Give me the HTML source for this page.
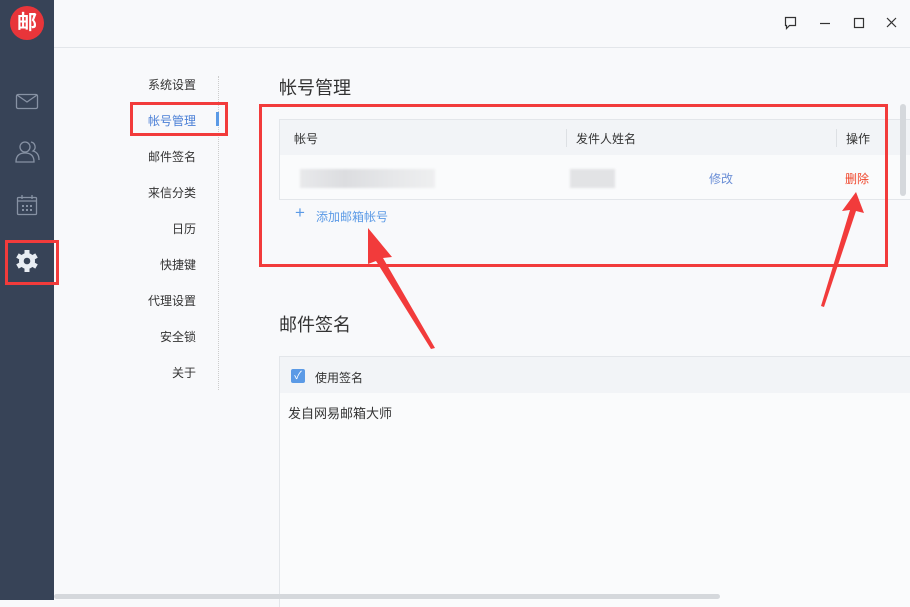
<!DOCTYPE html><html><head><meta charset="utf-8"><style>
body{margin:0;width:910px;height:600px;overflow:hidden;background:#f8f9fb;font-family:"Liberation Sans","Noto Sans CJK SC",sans-serif;position:relative}
.a{position:absolute}
.side{left:0;top:0;width:54px;height:600px;background:#374357}
.nav{font-size:12px;color:#333;width:70px;text-align:right;left:126px}
</style></head><body>
<div class="a side"></div>
<div class="a" style="left:10px;top:6px;width:34px;height:34px;border-radius:50%;background:#e8353a;color:#fff;font-size:20px;font-weight:bold;text-align:center;line-height:34px">邮</div>
<svg class="a" style="left:0;top:0" width="60" height="300">
<rect x="16.5" y="94.5" width="21" height="14" rx="1.5" fill="none" stroke="#8792a4" stroke-width="1.3"/><path d="M17 95l10 7 10-7" fill="none" stroke="#8792a4" stroke-width="1.3"/>
<circle cx="25" cy="147" r="5" fill="none" stroke="#8792a4" stroke-width="1.3"/><path d="M16 162c0-7 4-9 9-9s9 2 9 9z" fill="none" stroke="#8792a4" stroke-width="1.3"/><path d="M31 142a5 5 0 0 1 2 9c4 1 6 4 6 9" fill="none" stroke="#8792a4" stroke-width="1.3"/>
<rect x="17.5" y="197.5" width="19" height="17" rx="1" fill="none" stroke="#8792a4" stroke-width="1.3"/><path d="M22 195v4M32 195v4M18 201h18" stroke="#8792a4" stroke-width="1.3"/><g fill="#8792a4"><rect x="22" y="205" width="2" height="2"/><rect x="26" y="205" width="2" height="2"/><rect x="30" y="205" width="2" height="2"/><rect x="22" y="209" width="2" height="2"/><rect x="26" y="209" width="2" height="2"/><rect x="30" y="209" width="2" height="2"/></g>
<g transform="translate(27,261)" fill="#e8edf3"><circle r="8"/><g><rect x="-2.5" y="-11" width="5" height="22"/><rect x="-2.5" y="-11" width="5" height="22" transform="rotate(60)"/><rect x="-2.5" y="-11" width="5" height="22" transform="rotate(120)"/></g><circle r="3.3" fill="#374357"/></g>
<rect x="6.5" y="241.5" width="51" height="42" fill="none" stroke="#f23b3b" stroke-width="3"/>
</svg>
<div class="a" style="left:54px;top:47px;width:856px;height:1px;background:#e3e6ea"></div>
<svg class="a" style="left:780px;top:14px" width="120" height="20" fill="none" stroke="#333" stroke-width="1.2">
<path d="M5.5 3.5h10v8h-6l-3 3v-3h-1z"/><path d="M40 9.5h10"/><rect x="74.5" y="4.5" width="9" height="9"/><path d="M107 4l9 9M116 4l-9 9"/></svg>
<div class="a" style="left:218px;top:76px;width:0;height:314px;border-left:1px dotted #ccc"></div>
<div class="a nav" style="top:76px">系统设置</div>
<div class="a nav" style="top:112px;color:#4a7fd6">帐号管理</div>
<div class="a" style="left:216px;top:112px;width:3px;height:14px;background:#5b9ae6"></div>
<div class="a" style="left:130px;top:102px;width:98px;height:34px;border:3px solid #f23b3b;box-sizing:border-box"></div>
<div class="a nav" style="top:148px">邮件签名</div>
<div class="a nav" style="top:184px">来信分类</div>
<div class="a nav" style="top:220px">日历</div>
<div class="a nav" style="top:256px">快捷键</div>
<div class="a nav" style="top:292px">代理设置</div>
<div class="a nav" style="top:328px">安全锁</div>
<div class="a nav" style="top:364px">关于</div>
<div class="a" style="left:279px;top:74px;font-size:18px;color:#333">帐号管理</div>
<div class="a" style="left:279px;top:119px;width:631px;height:79px;border:1px solid #e3e6ea;background:#fafbfc"></div>
<div class="a" style="left:280px;top:120px;width:630px;height:35px;background:#f2f4f7"></div>
<div class="a" style="left:566px;top:129px;width:1px;height:18px;background:#dde0e4"></div>
<div class="a" style="left:836px;top:129px;width:1px;height:18px;background:#dde0e4"></div>
<div class="a" style="left:294px;top:130px;font-size:12px;color:#333">帐号</div>
<div class="a" style="left:576px;top:130px;font-size:12px;color:#333">发件人姓名</div>
<div class="a" style="left:846px;top:130px;font-size:12px;color:#333">操作</div>
<div class="a" style="left:300px;top:169px;width:135px;height:19px;background:linear-gradient(90deg,#e8e9eb,#dcdde0,#e6e7e9,#eeeff0);filter:blur(1px)"></div>
<div class="a" style="left:570px;top:169px;width:45px;height:19px;background:#e2e3e5;filter:blur(1px)"></div>
<div class="a" style="left:709px;top:170px;font-size:12px;color:#6a8ed6">修改</div>
<div class="a" style="left:845px;top:170px;font-size:12px;color:#f0452a">删除</div>
<div class="a" style="left:295px;top:203px;font-size:17px;color:#5b9ae6;font-weight:300">+</div>
<div class="a" style="left:316px;top:208px;font-size:12px;color:#5b9ae6">添加邮箱帐号</div>
<div class="a" style="left:259px;top:104px;width:629px;height:163px;border:3px solid #f23b3b;box-sizing:border-box"></div>
<div class="a" style="left:900px;top:104px;width:6px;height:92px;background:#d5d8dc;border-radius:3px"></div>
<div class="a" style="left:279px;top:311px;font-size:18px;color:#333">邮件签名</div>
<div class="a" style="left:279px;top:356px;width:631px;height:250px;border:1px solid #e3e6ea;border-bottom:none;background:#fafbfc"></div>
<div class="a" style="left:280px;top:357px;width:630px;height:36px;background:#f2f4f7"></div>
<div class="a" style="left:291px;top:369px;width:14px;height:14px;background:#5b9ae6;border-radius:2px;color:#fff;font-size:11px;line-height:14px;text-align:center">✓</div>
<div class="a" style="left:315px;top:369px;font-size:12px;color:#333">使用签名</div>
<div class="a" style="left:288px;top:403px;font-size:13px;color:#333">发自网易邮箱大师</div>
<div class="a" style="left:54px;top:594px;width:666px;height:5px;background:#d5d8dc;border-radius:3px"></div>
<svg class="a" style="left:0;top:0" width="910" height="600">
<polygon points="368,228 392,257 383,258 435,348 431,349 376,261 368,264" fill="#f23b3b"/>
<polygon points="856,192 864,213 856,211 824,307 821,306 850,210 842,211" fill="#f23b3b"/>
</svg>
</body></html>
